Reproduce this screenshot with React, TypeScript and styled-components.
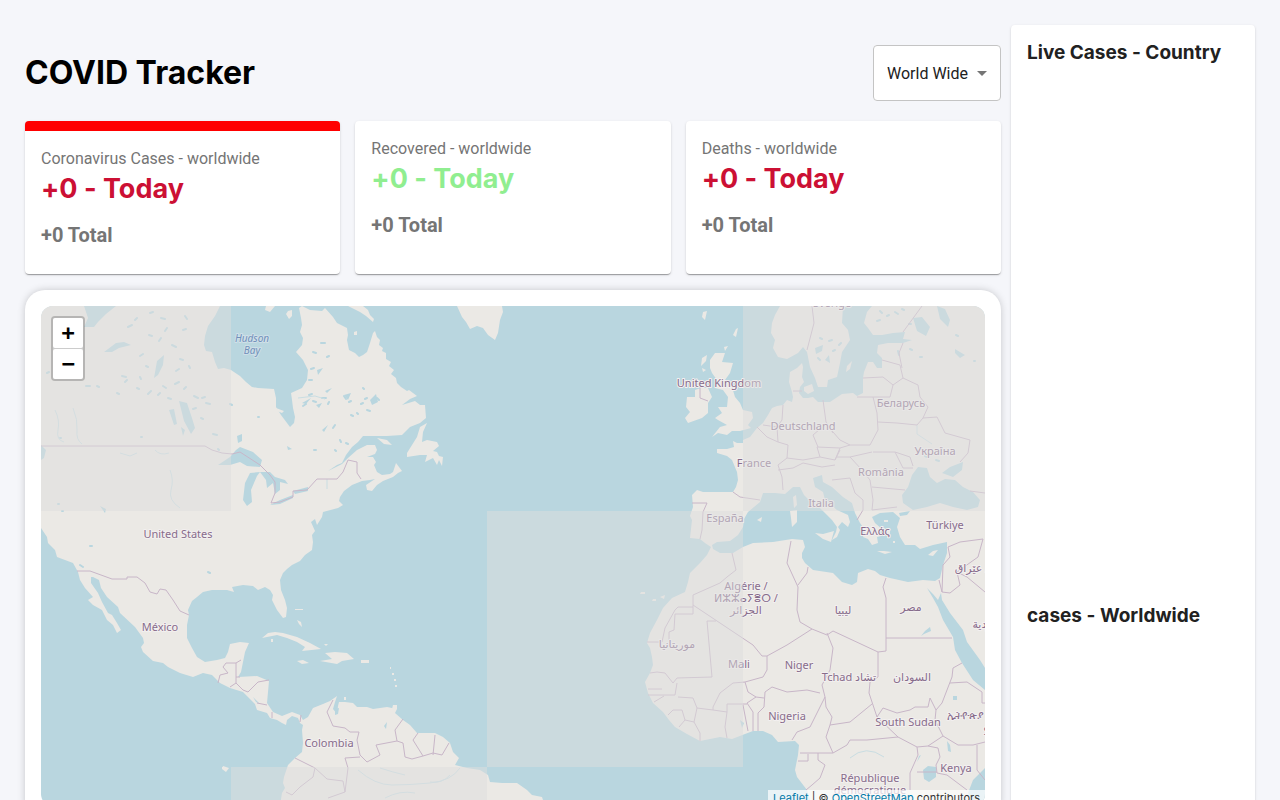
import React from "react";
import styled, { createGlobalStyle } from "styled-components";

const GlobalStyle = createGlobalStyle`
  *, *::before, *::after { box-sizing: border-box; }
  body {
    margin: 0;
    background: #f5f6fa;
    color: #000;
    font-family: Inter, sans-serif;
    font-variant-ligatures: no-contextual;
  }
  h1, h2, h3, p { margin: 0; }
`;

const Page = styled.div`
  display: grid;
  grid-template-columns: minmax(0, 4fr) minmax(0, 1fr);
  gap: 10px;
  padding: 25px;
`;

const Main = styled.main`
  min-width: 0;
`;

const Header = styled.header`
  display: flex;
  align-items: center;
  justify-content: space-between;
  padding: 20px 0;
`;

const Title = styled.h1`
  font-size: 32px;
  line-height: 40px;
  font-weight: 700;
`;

const Picker = styled.label`
  position: relative;
  display: flex;
  background: #fff;
  border-radius: 4px;

  svg {
    position: absolute;
    top: 16px;
    right: 7px;
    width: 24px;
    height: 24px;
    fill: #757575;
    pointer-events: none;
  }
`;

const CountrySelect = styled.select`
  appearance: none;
  height: 56px;
  padding: 2px 32px 0 13px;
  border: 1px solid #c4c4c4;
  border-radius: 4px;
  background: transparent;
  color: #212121;
  font: 400 16px/24px Roboto, sans-serif;
`;

const Stats = styled.section`
  display: grid;
  grid-template-columns: repeat(3, 1fr);
  gap: 15px;
`;

const paper = `
  background: #fff;
  border-radius: 4px;
  box-shadow: 0 2px 1px -1px rgba(0, 0, 0, 0.2), 0 1px 1px rgba(0, 0, 0, 0.14), 0 1px 3px rgba(0, 0, 0, 0.12);
`;

const StatCard = styled.article<{ $active?: boolean }>`
  ${paper}
  min-height: 153px;
  padding: 16px;
  border-top: ${(p) => (p.$active ? "10px solid red" : "none")};
`;

const StatLabel = styled.p`
  color: #757575;
  font: 400 16px/24px Roboto, sans-serif;
`;

const StatToday = styled.h2<{ $good?: boolean }>`
  color: ${(p) => (p.$good ? "lightgreen" : "#cc1034")};
  font-size: 27px;
  line-height: 36px;
  font-weight: 700;
`;

const StatTotal = styled.p`
  margin-top: 16px;
  color: #757575;
  font: 700 20px/24px Roboto, sans-serif;
`;

const MapCard = styled.section`
  margin-top: 16px;
  padding: 16px;
  background: #fff;
  border-radius: 20px;
  box-shadow: 0 0 8px -1px rgba(0, 0, 0, 0.24);
`;

const MapFrame = styled.div`
  position: relative;
  height: 500px;
  overflow: hidden;
  border-radius: 12px;
  background: #b9d6df;
`;

const MapDrawing = styled.svg`
  display: block;
  width: 100%;
  height: 100%;

  .land { fill: #ebe9e5; }
  .water { fill: #b9d6df; }
  .specks { fill: none; stroke: #b9d6df; stroke-width: 2; stroke-linecap: round; }
  .river { fill: none; stroke: #c9dde2; stroke-width: 1; }
  .border { fill: none; stroke: #c8b6c8; stroke-width: 1; stroke-linejoin: round; }
  .fade { fill: #ddd; fill-opacity: 0.5; }
  text {
    fill: #876c8b;
    stroke: #f3f0f0;
    stroke-width: 2px;
    paint-order: stroke;
    stroke-linejoin: round;
    text-anchor: middle;
    font: 400 11px "Noto Sans", "DejaVu Sans", sans-serif;
  }
  .sea { fill: #6f8fba; stroke: #cfe0e8; font-style: italic; font-size: 10px; }
`;

const ZoomControl = styled.div`
  position: absolute;
  top: 10px;
  left: 10px;
  display: flex;
  flex-direction: column;
  gap: 1px;
  border: 2px solid rgba(0, 0, 0, 0.2);
  border-radius: 4px;
  background: #ccc padding-box;
`;

const ZoomButton = styled.button`
  width: 30px;
  height: 30px;
  padding: 0;
  border: 0;
  border-radius: 2px;
  background: #fff;
  color: #000;
  font: bold 22px/30px "DejaVu Sans Mono", monospace;
`;

const Attribution = styled.p`
  position: absolute;
  right: 0;
  bottom: 0;
  padding: 0 5px;
  background: rgba(255, 255, 255, 0.7);
  color: #333;
  font: 400 11px/16px Inter, sans-serif;

  a { color: #0078a8; }
`;

const Sidebar = styled.aside`
  ${paper}
  min-width: 0;
  padding: 16px;
`;

const SideTitle = styled.h3`
  color: #212121;
  font-size: 19px;
  line-height: 23px;
  font-weight: 700;
`;

const CountryTable = styled.div`
  height: 400px;
  margin: 20px 0 120px;
`;

const land = [
  // North and South America
  "M41 306H220L215 316 208 326 205 336 204 345 206 351 212 352 215 362 218 369 224 368 231 370 240 376 246 382 252 387 258 388 274 389 276 398 276 407 281 415 287 423 290 427 294 423 295 417 293 408 292 400 291 393 302 388 307 380 308 370 303 360 296 352 302 345 303 338 300 332 302 325 301 318 299 308 302 306 310 310 322 311 325 308 333 317 337 323 345 327 347 328 348 335 347 340 349 350 355 353 359 357 363 355 367 352 370 343 373 333 375 331 377 337 380 340 379 345 383 348 382 351 386 353 386 359 391 362 389 366 394 370 391 374 396 378 397 383 401 387 407 391 409 390 417 396 410 399 402 405 415 401 420 405 425 405 426 418 420 423 410 427 402 435 387 436 363 436 358 442 352 447 346 455 342 463 337 465 328 471 342 464 348 458 357 450 367 445 375 445 377 450 375 454 367 457 373 457 376 462 374 465 377 472 382 475 390 474 393 472 396 463 402 471 398 473 393 477 383 481 377 485 372 491 367 490 366 485 375 479 370 480 362 481 352 485 344 491 340 497 339 501 343 505 338 508 323 512 322 517 317 525 315 519 311 522 315 531 312 535 313 542 312 550 305 555 300 561 292 565 287 569 283 573 280 580 281 590 285 600 287 608 286 617 283 618 277 610 272 600 273 595 270 590 265 587 258 590 253 586 243 585 232 587 234 592 227 590 212 590 203 592 197 597 192 601 188 610 189 615 187 625 187 638 192 648 197 657 205 662 217 660 225 658 228 652 230 644 240 642 249 643 245 652 243 662 241 672 238 677 257 676 269 681 268 692 267 703 273 712 282 716 292 712 300 715 303 720 308 717 313 708 323 704 330 701 337 696 335 702 333 709 337 714 338 706 339 702 345 702 353 703 357 707 367 707 373 709 387 707 397 709 395 713 403 720 410 725 417 733 435 733 443 737 450 743 453 752 459 758 455 765 467 768 480 770 488 775 490 782 502 783 517 783 527 790 532 795 542 797 545 806H280L282 793 285 788 283 783 284 777 288 765 295 758 302 752 303 743 302 730 303 725 300 723 298 718 292 716 287 720 286 725 282 723 277 720 270 718 267 713 257 710 255 704 243 692 230 688 220 683 212 675 203 673 193 677 180 673 168 667 163 663 153 661 143 652 141 647 144 643 143 638 135 627 120 613 118 607 107 597 101 588 99 580 93 577 91 577 91 583 98 593 102 602 108 613 112 615 117 623 121 630 117 633 113 625 107 620 102 610 93 605 88 600 93 597 85 588 80 580 78 572 73 563 65 560 57 557 55 550 48 543 47 537 41 528Z",
  // Europe, Asia and Africa
  "M872 306H985V806H812L807 790 797 777 795 770 798 755 799 745 795 741 778 742 772 735 763 731 753 731 745 734 732 739 720 737 700 741 687 734 675 727 669 720 663 712 653 703 648 693 645 682 650 673 653 665 652 657 650 648 647 643 650 633 657 620 663 608 672 598 685 592 688 582 690 573 700 563 707 555 711 547 705 543 700 539 690 538 692 520 690 516 693 507 692 495 697 490 703 492 718 492 733 492 736 487 738 480 737 472 732 460 727 456 717 453 717 449 727 449 734 447 733 441 737 443 743 443 743 440 750 437 757 428 763 423 768 415 772 408 777 406 783 405 787 400 792 402 793 397 792 392 789 382 790 372 797 368 802 363 803 367 802 377 804 382 800 387 799 393 803 398 808 398 813 397 818 402 830 402 842 394 853 393 857 396 863 393 863 378 864 372 868 362 873 362 877 368 882 368 882 358 877 353 878 345 888 343 903 343 912 340 903 339 905 332 893 333 882 335 873 335 868 328 864 323 867 312Z",
  // Scandinavia
  "M780 306H843L842 323 848 330 850 340 842 352 840 363 837 377 828 380 827 387 818 387 815 378 810 367 807 352 803 347 798 353 787 359 778 357 773 348 775 340 771 333 772 323 775 315Z",
  // Great Britain and Ireland
  "M715 353 725 353 722 362 733 363 730 373 725 380 732 387 735 397 740 403 743 410 752 412 753 418 748 425 751 428 740 431 732 431 727 435 718 433 712 437 720 427 727 425 718 420 715 418 722 413 718 407 727 407 728 397 723 390 715 388 717 380 712 373 710 368 710 360Z",
  "M695 390 701 388 708 388 712 397 708 403 708 413 702 418 688 423 685 418 690 412 686 407 687 397 695 397Z",
  // Newfoundland, Greenland, Baffin Island
  "M427 423 420 427 417 437 412 445 407 453 407 457 420 455 427 455 425 462 433 458 437 465 439 460 442 466 443 457 439 456 437 452 433 451 439 446 437 442 427 440 422 442 423 432Z",
  "M457 306 462 317 466 322 470 329 477 326 483 328 488 335 495 340 498 333 500 320 503 312 502 306Z",
  "M348 306 360 312 366 316 373 322 374 319 370 315 368 310 363 306Z M288 311 292 310 292 316 289 319 286 314Z M266 306H275L270 312 265 310Z M377 438 387 440 392 445 384 444Z M276 408 284 411 282 413 277 411Z M354 332 357 331 357 335 354 335Z",
  // Caribbean
  "M262 638 268 633 275 632 283 633 297 637 310 643 321 649 302 651 305 647 297 642 287 638 277 635Z M325 653 335 652 347 653 354 659 342 661 337 664 320 661 332 659Z M361 660H369V663H361Z M297 661 303 660 309 663 302 664Z M271 639H273V642H271Z M297 620 301 622 302 627 299 624Z M295 609H303V610H295Z M324 644 328 644 326 646Z M393 705H397V709H392Z M344 697H346V700H344Z M390 667H391V669H390Z M392 673H394V675H392Z M394 679H396V681H394Z M395 685H397V687H395Z M222 767H224V769H222Z",
  // Small islands of the north and the Atlantic
  "M703 312 707 311 705 320 702 317Z M736 329 738 328 736 337 733 335Z M702 358 707 355 706 361 701 366Z M702 368 706 370 703 372Z M724 347 728 346 725 351Z M804 387 812 384 814 391 808 394 804 391Z M847 366 852 361 850 369 846 372Z M223 766 229 768 226 772 222 769Z M641 592H645V594H640Z M653 599H656V601H652Z M660 597 665 595 664 599Z",
];

const inlandSeas = [
  // Mediterranean
  "M712 545 717 542 730 541 738 535 743 527 744 519 748 512 760 502 763 493 775 493 785 494 793 487 800 487 804 495 812 503 820 508 827 515 832 520 837 527 836 532 832 540 837 537 840 530 838 527 842 522 848 527 850 522 848 515 837 510 825 500 823 492 815 487 813 478 822 475 823 482 832 487 843 497 852 503 855 513 860 523 865 530 863 537 868 539 872 545 878 543 877 537 881 536 878 533 883 530 875 523 872 517 880 513 893 512 900 518 897 527 900 537 905 545 915 545 920 549 933 545 947 542 947 553 943 565 940 578 935 581 923 580 908 582 890 578 880 575 875 571 868 569 858 573 857 582 852 585 842 582 833 573 813 570 805 563 802 558 802 553 805 547 803 540 792 539 773 542 753 543 743 547 733 553 720 553 713 549Z",
  // Black Sea, Azov, Marmara
  "M918 467 927 468 930 477 937 483 945 479 955 480 963 487 973 492 980 500 978 507 967 510 953 507 940 503 927 507 913 510 903 503 902 495 908 487 912 475Z M942 473 950 467 963 462 962 470 953 477Z M899 513 910 511 907 515 900 516Z",
  // Red Sea and Indian Ocean
  "M927 588 933 594 938 600 941 593 942 600 950 613 963 630 967 642 980 660 985 668V690L973 680 962 663 955 650 953 637 943 620 938 607 933 598Z M985 768 973 780 968 793 975 806H985Z",
  // Great Lakes
  "M218 465 230 457 236 450 240 447 253 452 262 460 260 467 247 466 240 462 230 465Z M260 472 250 473 245 483 243 500 247 506 252 502 251 490 257 476Z M260 472 270 472 275 477 285 480 288 484 280 482 280 490 275 494 273 483 267 488 266 480Z M270 505 280 500 293 495V498L280 504Z M293 491 308 487 308 491 295 494Z",
  // Lakes of Canada
  "M84 306H116L106 314 98 322 94 327H84L88 318Z M104 352 116 343 124 342 131 345 119 348 112 352Z M157 361 164 355 163 365 158 375 154 378Z M179 401 187 403 192 418 195 428 191 434 184 421Z M169 410 174 409 177 424 174 425Z M181 427 185 430 183 436Z M237 436 242 434 242 441 238 443Z M41 445 46 450 44 458 41 460Z M100 506 106 509 105 513Z M302 403 311 398 306 404Z M316 405 322 403 319 408Z M325 391 332 388 327 393Z M370 400 376 394 378 402 372 405Z M322 430 328 425 324 432Z M344 395 351 393 348 400Z M317 370 323 368 318 375Z M287 446 292 449 288 450Z",
  // Lakes and gulfs of Europe and Africa
  "M913 318 922 317 930 327 926 336 917 331Z M937 306 945 309 950 320 948 327 940 319Z M955 349 965 355 960 358 955 353Z M815 348 823 345 822 351 816 354Z M825 360 829 355 830 363Z M923 770 928 766 936 767V777L929 782 924 779Z M947 741 950 745 951 752 948 751Z M953 696H957V700H953Z M919 756 921 755 917 762Z M921 636 925 631 930 627 931 631 924 634Z M335 709 339 708 338 714 335 715Z M384 726 387 722 386 729Z M253 697 257 701 260 704 256 702Z M740 720 744 723 742 728Z",
];

const specks =
  "M135 320l2 -2M150 313l3 -1M161 318l4 1M167 328l-2 3M128 327l4 -2M149 335l3 1M159 341l2 -3M172 345l4 2M183 330l3 -1M185 316l2 3M180 359l3 1M176 371l3 -2M189 366l1 2M140 356l3 -2M146 366l2 1M122 376l4 1M125 382l2 -2M137 388l2 1M148 394l3 -3M158 395l2 -2M163 386l3 2M175 384l4 -2M184 389l2 -2M194 396l4 2M202 398l3 -1M206 403l4 1M168 398l3 1M117 393l2 1M86 386l4 0M97 386l2 1M47 373l2 -1M140 377l1 2M193 409l3 -1M201 418l2 1M213 434l4 1M218 449l1 1M141 437l1 0M230 404l2 1M258 417l1 0M309 395l3 -1M313 401l3 1M303 406l3 -2M322 398l4 0M328 404l1 -2M344 396l2 3M349 402l2 -1M365 399l2 -1M361 404l2 -1M367 410l3 1M377 398l2 2M311 369l3 -1M321 343l4 0M313 352l3 1M309 380l3 0M327 357l2 -1M351 415l2 1M333 428l2 -3M314 450l2 0M340 440l1 2M335 450l1 1M346 443l2 1M357 413l1 1M363 388l1 1M58 504l1 0M62 511l1 0M80 565l3 2M90 546l2 0M208 572l2 1M60 438l1 0M818 358l2 2M833 351l2 -1M839 345l2 -2M820 338l2 1M829 341l3 -1M895 312l3 2M887 316l2 -1M880 311l2 2M902 309l2 1M877 321l3 -1M909 324l2 0M920 357l2 0M956 335l2 1M898 351l1 4M910 349l2 1M974 361l1 0M895 470l2 0M936 460l3 1M925 456l2 1";

const islands =
  "M790 511 797 510 797 522 792 527 791 518Z M793 497 796 495 797 505 794 508Z M815 533 823 534 834 531 831 542 823 539Z M877 551 884 551 892 552 885 554Z M928 555 933 551 938 550 933 556Z M757 520 762 517 761 522Z M887 531H890V534H887Z M869 528 877 535 875 538 867 533Z M884 520H888V522H884Z M893 541H895V543H893Z";

const rivers =
  "M55 410Q60 420 58 430T64 442M73 408Q78 420 77 430T82 444M120 453 130 456 137 453M155 450Q160 456 169 453M170 470Q174 480 171 490T180 508M298 398 315 396 325 399M358 770Q375 785 392 785T430 783T460 768M380 768Q392 772 405 775M430 782Q442 784 450 775M385 798Q400 790 415 793M850 758Q866 744 884 757M917 425 917 434 932 444M327 479V489";

const borders = [
  "M41 446H205L212 450 222 453 232 454 240 452 260 465 270 475 275 482V493L271 503 280 502 293 497V491L307 490 317 479H337L343 472 348 460 357 462V473L361 479",
  "M77 571H90L112 579H127V577H137L145 583 150 592 157 594 160 589 166 590 173 600 180 611 189 615",
  "M218 683 220 675 228 673 223 667 226 663H236L241 660M236 663V677H240M236 677 236 683 230 687M236 683 243 690 248 692 258 682 269 680M257 703 267 705M272 712V718M301 715 300 722",
  "M333 700 327 712 333 726 345 728 350 732H359L357 740 360 755 367 762 380 755 376 745 397 741 395 730 403 719M397 741 403 743 405 757 412 759 423 756 433 753 442 755 449 743M423 756 413 740 418 733M433 755 435 735M360 757 345 758 348 768 345 792 328 798M295 758 315 768 327 779 343 781 345 792M315 768 313 777 300 787 292 795 286 792",
  "M733 492 740 497 760 500M692 503H707L703 512 702 530 700 539M757 427 767 437 778 442 788 445 787 458 778 465 782 477 783 490M783 405 782 420 777 427 778 442M763 425 777 427M787 458 803 460 820 457 835 460 840 448 817 447 820 457M778 470 793 468 803 463 822 467 835 465M823 400 826 422 833 433M826 424 813 435 818 447M826 424 840 440 850 445H870L878 430 877 413 873 397H857M840 448 850 445M835 460 840 450M837 457H850L872 452",
  "M863 378 883 377 893 385 890 397H873M882 360 900 365 903 378 893 385M903 343 899 353 902 368M903 378 918 385 920 397 928 407 923 418 917 425 897 423 878 422M923 418 937 417 945 433 970 440 968 453 960 462M873 452 895 452 903 468 913 468M895 452 910 457 913 466M872 487 905 490M832 480 850 478 855 493 863 500V510L857 520M873 500 872 510 897 507M850 457 862 470 870 480 873 500M903 332 922 306M812 306 814 323 807 350M970 491 985 493M700 388V398L708 401M793 391H802",
  "M732 553 736 570 727 577 720 583 693 595V614H675L674 630 669 632V640M647 642H662L665 628 675 610 678 607H693M693 605 717 621 753 645 762 656H767L787 645 812 629 800 622 797 610 798 587 787 563 791 541M808 567 807 573 798 585M716 621H707L712 677 677 678 673 683 665 673 657 672 650 673M767 656V670L763 677 745 682 733 683 720 693 713 707",
  "M648 695H675L677 683M648 689H662M654 702 664 696M678 697 693 698 697 708 694 722 700 733V741M697 708 713 710 727 712 725 727 727 738M713 707V710M727 712V704H747M743 705 748 731M747 703 753 712V731M758 731V713L764 707 765 692 772 687 787 692 807 690 820 693M745 682 748 692 756 697 764 698M756 697 747 703M668 715 673 710H682L685 720 679 727M685 720 694 722M792 740 797 732 810 727 820 707 825 697",
  "M886 578 883 587 886 598V638H952M886 638V651L878 652V677L870 682 869 693 873 705 877 717M878 652 833 631 827 635 812 629M827 633 833 648 830 670 822 685 825 697 826 707 832 717 830 725 850 722 872 704M830 725 826 737 833 753H800M798 761H808V754M833 753 847 745 850 740 867 740 898 737 917 747 928 746 943 736 935 720 936 710 930 698 928 707 915 707 910 710 897 713 883 708 877 717 898 737",
  "M936 710 942 703 947 690 952 677 953 668 962 663M950 683 967 682 982 692V703H985M943 736 958 745H973L985 742M977 745V770L985 780M928 746 938 748 940 757 936 765 937 773 947 775 967 790M917 772H937M917 747 918 755 910 773V790M818 753V760L825 765 820 778 812 785 806 790",
  "M942 592 943 565 950 557 948 547 960 542 983 539 978 557 957 572 960 585 950 593 942 592 939 580M957 572 967 577 985 592",
];

const places: { x: number; y: number; name: string }[] = [
  { x: 178, y: 538, name: "United States" },
  { x: 160, y: 631, name: "México" },
  { x: 329, y: 747, name: "Colombia" },
  { x: 719, y: 387, name: "United Kingdom" },
  { x: 803, y: 430, name: "Deutschland" },
  { x: 754, y: 467, name: "France" },
  { x: 821, y: 507, name: "Italia" },
  { x: 725, y: 522, name: "España" },
  { x: 832, y: 307, name: "Sverige" },
  { x: 901, y: 407, name: "Беларусь" },
  { x: 935, y: 455, name: "Україна" },
  { x: 881, y: 476, name: "România" },
  { x: 875, y: 535, name: "Ελλάς" },
  { x: 945, y: 529, name: "Türkiye" },
  { x: 746, y: 590, name: "Algérie /" },
  { x: 746, y: 602, name: "ⵍⵣⵣⴰⵢⴻⵔ /" },
  { x: 746, y: 614, name: "الجزائر" },
  { x: 843, y: 614, name: "ليبيا" },
  { x: 911, y: 611, name: "مصر" },
  { x: 972, y: 572, name: "عێراق /" },
  { x: 993, y: 628, name: "السعودية" },
  { x: 677, y: 648, name: "موريتانيا" },
  { x: 739, y: 668, name: "Mali" },
  { x: 799, y: 669, name: "Niger" },
  { x: 849, y: 681, name: "Tchad تشاد" },
  { x: 912, y: 681, name: "السودان" },
  { x: 787, y: 720, name: "Nigeria" },
  { x: 908, y: 726, name: "South Sudan" },
  { x: 965, y: 719, name: "ኢትዮጵያ" },
  { x: 1004, y: 735, name: "Somalia" },
  { x: 956, y: 772, name: "Kenya" },
  { x: 870, y: 782, name: "République" },
  { x: 870, y: 794, name: "démocratique" },
];

const WorldMap = () => (
  <MapDrawing viewBox="41 306 944 500" preserveAspectRatio="xMidYMid slice" role="img" aria-label="World map">
    {land.map((d) => <path key={d} className="land" d={d} />)}
    {inlandSeas.map((d) => <path key={d} className="water" d={d} />)}
    <path className="specks" d={specks} />
    <path className="land" d={islands} />
    <path className="river" d={rivers} />
    {borders.map((d) => <path key={d} className="border" d={d} />)}
    <text className="sea" x="252" y="342">Hudson</text>
    <text className="sea" x="252" y="354">Bay</text>
    {places.map((p) => <text key={p.name} x={p.x} y={p.y}>{p.name}</text>)}
    <path className="fade" d="M41 306H231V511H41Z M743 306H985V511H743Z M487 511H743V767H487Z M231 767H487V806H231Z" />
  </MapDrawing>
);

const stats = [
  { label: "Coronavirus Cases - worldwide", active: true, good: false },
  { label: "Recovered - worldwide", active: false, good: true },
  { label: "Deaths - worldwide", active: false, good: false },
];

export default function App() {
  return (
    <>
      <GlobalStyle />
      <Page>
        <Main>
          <Header>
            <Title>COVID Tracker</Title>
            <Picker>
              <CountrySelect aria-label="Country" defaultValue="worldwide">
                <option value="worldwide">World Wide</option>
              </CountrySelect>
              <svg viewBox="0 0 24 24" aria-hidden="true"><path d="M7 10l5 5 5-5z" /></svg>
            </Picker>
          </Header>
          <Stats>
            {stats.map((s) => (
              <StatCard key={s.label} $active={s.active}>
                <StatLabel>{s.label}</StatLabel>
                <StatToday $good={s.good}>+0 - Today</StatToday>
                <StatTotal>+0 Total</StatTotal>
              </StatCard>
            ))}
          </Stats>
          <MapCard>
            <MapFrame>
              <WorldMap />
              <ZoomControl>
                <ZoomButton type="button" aria-label="Zoom in">+</ZoomButton>
                <ZoomButton type="button" aria-label="Zoom out">−</ZoomButton>
              </ZoomControl>
              <Attribution>
                <a href="#leaflet">Leaflet</a> | © <a href="#openstreetmap">OpenStreetMap</a> contributors
              </Attribution>
            </MapFrame>
          </MapCard>
        </Main>
        <Sidebar>
          <SideTitle>Live Cases - Country</SideTitle>
          <CountryTable />
          <SideTitle>cases - Worldwide</SideTitle>
        </Sidebar>
      </Page>
    </>
  );
}
